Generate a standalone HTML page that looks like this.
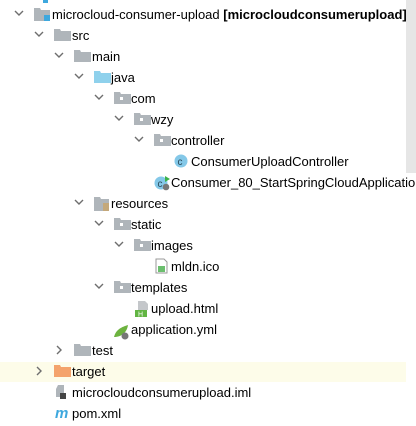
<!DOCTYPE html>
<html><head><meta charset="utf-8"><style>
body{margin:0;width:416px;height:426px;background:#fff;position:relative;overflow:hidden;font-family:"Liberation Sans","Noto Sans CJK SC",sans-serif;font-size:13px;color:#000}
.r{position:absolute;left:0;height:21px;line-height:21px;white-space:nowrap}
.t{position:absolute;top:0}
svg{position:absolute}
.sb{position:absolute;left:406px;top:0;width:10px;height:173px;background:#e6e6e6}
</style></head><body>
<div class="sb"></div>
<svg style="left:43px;top:0" width="6" height="4"><rect width="5" height="3" fill="#3ea8de"/></svg>
<div class="r" style="top:362px;width:406px;height:20px;background:#fdfce9"></div>

<svg width="416" height="426" style="left:0;top:0">
<g fill="none" stroke="#6e6e6e" stroke-width="1.4">
<path d="M15 11l4 4 4-4"/>
<path d="M35 32l4 4 4-4"/>
<path d="M55 53l4 4 4-4"/>
<path d="M75 74l4 4 4-4"/>
<path d="M95 95l4 4 4-4"/>
<path d="M115 116l4 4 4-4"/>
<path d="M135 137l4 4 4-4"/>
<path d="M75 200l4 4 4-4"/>
<path d="M95 221l4 4 4-4"/>
<path d="M115 242l4 4 4-4"/>
<path d="M95 284l4 4 4-4"/>
<path d="M57 346l4 4-4 4"/>
<path d="M37 367l4 4-4 4"/>
</g>
<path d="M34 8h6l1 2h9v11H34z" fill="#afb5ba"/><rect x="44" y="15" width="6" height="6" fill="#3ea8de"/>
<path d="M54 29h6l1 2h10v10H54z" fill="#afb5ba"/>
<path d="M74 50h6l1 2h10v10H74z" fill="#afb5ba"/>
<path d="M94 71h6l1 2h10v10H94z" fill="#8fd1ec"/>
<path d="M114 92h6l1 2h10v10h-17z" fill="#afb5ba"/><rect x="120" y="97" width="3" height="3" fill="#fff"/>
<path d="M134 113h6l1 2h10v10h-17z" fill="#afb5ba"/><rect x="140" y="118" width="3" height="3" fill="#fff"/>
<path d="M154 134h6l1 2h10v10h-17z" fill="#afb5ba"/><rect x="160" y="139" width="3" height="3" fill="#fff"/>
<circle cx="181" cy="161" r="6.5" fill="#84c8e8"/><text x="177.5" y="165" font-size="10" fill="#2a4a5a" font-family="Liberation Sans">c</text>
<circle cx="161" cy="183" r="6.5" fill="#84c8e8"/><text x="157.5" y="187" font-size="10" fill="#2a4a5a" font-family="Liberation Sans">c</text>
<path d="M165 176l5 3-5 3z" fill="#3bb24a"/><circle cx="166" cy="187" r="3.3" fill="#777"/>
<path d="M94 197h6l1 2h8v12H94z" fill="#afb5ba"/><g stroke="#d99a3b" stroke-width="1"><path d="M103 204h6M103 206h6M103 208h6M103 210h6"/></g>
<path d="M114 218h6l1 2h10v10h-17z" fill="#afb5ba"/><rect x="120" y="223" width="3" height="3" fill="#fff"/>
<path d="M134 239h6l1 2h10v10h-17z" fill="#afb5ba"/><rect x="140" y="244" width="3" height="3" fill="#fff"/>
<path d="M156 259h8l3 3v11h-11z" fill="#fff" stroke="#999"/><rect x="158" y="266" width="7" height="6" fill="#6bbf6e"/>
<path d="M114 281h6l1 2h10v10h-17z" fill="#afb5ba"/><rect x="120" y="286" width="3" height="3" fill="#fff"/>
<path d="M138 301h7l3 3v6h-10z" fill="#c4c7ca"/><rect x="135" y="310" width="12" height="7" fill="#62b543"/><text x="138" y="316.5" font-size="7" fill="#fff" font-family="Liberation Sans">H</text>
<path d="M114 337c2-8 8-10 14-12-1 7-6 12-14 12z" fill="#6db33f"/><circle cx="125" cy="336" r="3.5" fill="#777"/>
<path d="M74 344h6l1 2h10v10H74z" fill="#afb5ba"/>
<path d="M54 365h6l1 2h10v10H54z" fill="#f4a36c"/>
<path d="M58 385h6v12h-8v-8z" fill="#afb5ba"/><rect x="60" y="393" width="6" height="6" fill="#444"/>
</svg>
<div class="r" style="top:4px"><span class="t" style="left:52px">microcloud-consumer-upload <b>[microcloudconsumerupload]</b></span></div>
<div class="r" style="top:25px"><span class="t" style="left:72px">src</span></div>
<div class="r" style="top:46px"><span class="t" style="left:92px">main</span></div>
<div class="r" style="top:67px"><span class="t" style="left:111px">java</span></div>
<div class="r" style="top:88px"><span class="t" style="left:131px">com</span></div>
<div class="r" style="top:109px"><span class="t" style="left:151px">wzy</span></div>
<div class="r" style="top:130px"><span class="t" style="left:171px">controller</span></div>
<div class="r" style="top:151px"><span class="t" style="left:191px">ConsumerUploadController</span></div>
<div class="r" style="top:172px"><span class="t" style="left:171px">Consumer_80_StartSpringCloudApplication</span></div>
<div class="r" style="top:193px"><span class="t" style="left:111px">resources</span></div>
<div class="r" style="top:214px"><span class="t" style="left:131px">static</span></div>
<div class="r" style="top:235px"><span class="t" style="left:151px">images</span></div>
<div class="r" style="top:256px"><span class="t" style="left:171px">mldn.ico</span></div>
<div class="r" style="top:277px"><span class="t" style="left:131px">templates</span></div>
<div class="r" style="top:298px"><span class="t" style="left:151px">upload.html</span></div>
<div class="r" style="top:319px"><span class="t" style="left:131px">application.yml</span></div>
<div class="r" style="top:340px"><span class="t" style="left:92px">test</span></div>
<div class="r" style="top:361px"><span class="t" style="left:72px">target</span></div>
<div class="r" style="top:382px"><span class="t" style="left:72px">microcloudconsumerupload.iml</span></div>
<div class="r" style="top:403px"><span class="t" style="left:55px;color:#3ea8de;font-style:italic;font-weight:bold;font-size:15px">m</span><span class="t" style="left:72px">pom.xml</span></div>
</body></html>
